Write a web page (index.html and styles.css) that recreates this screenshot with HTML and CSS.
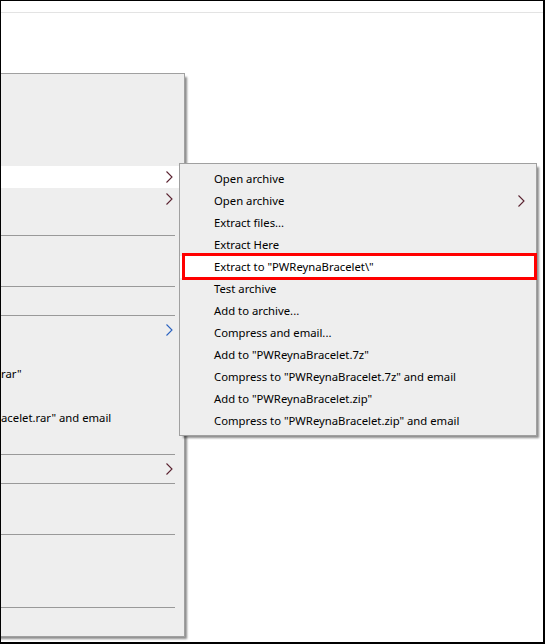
FILE: index.html
```html
<!DOCTYPE html>
<html>
<head>
<meta charset="utf-8">
<link rel="stylesheet" href="styles.css">
</head>
<body>
<div class="screen">
  <div class="topbar"></div>

  <div class="menu menu-left">
    <div class="item"></div>
    <div class="item"></div>
    <div class="item"></div>
    <div class="item"></div>
    <div class="item hl"><span class="label"></span><svg class="chev" width="7" height="12" viewBox="0 0 7 12"><polyline points="0.5,0.5 6,6 0.5,11.5" fill="none" stroke="#5a2230" stroke-width="1.1"/></svg></div>
    <div class="item"><span class="label"></span><svg class="chev" width="7" height="12" viewBox="0 0 7 12"><polyline points="0.5,0.5 6,6 0.5,11.5" fill="none" stroke="#5a2230" stroke-width="1.1"/></svg></div>
    <div class="item"></div>
    <div class="sep"></div>
    <div class="item"></div>
    <div class="item"></div>
    <div class="sep"></div>
    <div class="item"></div>
    <div class="sep"></div>
    <div class="item"><span class="label"></span><svg class="chev" width="7" height="12" viewBox="0 0 7 12"><polyline points="0.5,0.5 6,6 0.5,11.5" fill="none" stroke="#2a62c0" stroke-width="1.1"/></svg></div>
    <div class="item"></div>
    <div class="item edge"><span class="label">rar"</span></div>
    <div class="item"></div>
    <div class="item edge"><span class="label">acelet.rar" and email</span></div>
    <div class="item"></div>
    <div class="sep"></div>
    <div class="item"><span class="label"></span><svg class="chev" width="7" height="12" viewBox="0 0 7 12"><polyline points="0.5,0.5 6,6 0.5,11.5" fill="none" stroke="#5a2230" stroke-width="1.1"/></svg></div>
    <div class="sep"></div>
    <div class="item"></div>
    <div class="item"></div>
    <div class="sep"></div>
    <div class="item"></div>
    <div class="item"></div>
    <div class="item"></div>
    <div class="sep"></div>
    <div class="item"></div>
  </div>

  <div class="menu menu-right">
    <div class="item"><span class="label">Open archive</span></div>
    <div class="item"><span class="label">Open archive</span><svg class="chev" width="7" height="12" viewBox="0 0 7 12"><polyline points="0.5,0.5 6,6 0.5,11.5" fill="none" stroke="#5a2230" stroke-width="1.1"/></svg></div>
    <div class="item"><span class="label">Extract files...</span></div>
    <div class="item"><span class="label">Extract Here</span></div>
    <div class="item hl"><span class="label">Extract to "PWReynaBracelet\"</span></div>
    <div class="item"><span class="label">Test archive</span></div>
    <div class="item"><span class="label">Add to archive...</span></div>
    <div class="item"><span class="label">Compress and email...</span></div>
    <div class="item"><span class="label">Add to "PWReynaBracelet.7z"</span></div>
    <div class="item"><span class="label">Compress to "PWReynaBracelet.7z" and email</span></div>
    <div class="item"><span class="label">Add to "PWReynaBracelet.zip"</span></div>
    <div class="item"><span class="label">Compress to "PWReynaBracelet.zip" and email</span></div>
  </div>

  <div class="callout"></div>
</div>
</body>
</html>
```

FILE: styles.css
```css
html, body {
  margin: 0;
  padding: 0;
  background: #fff;
}

.screen {
  position: relative;
  width: 545px;
  height: 644px;
  box-sizing: border-box;
  border-top: 1px solid #000;
  border-left: 1px solid #000;
  border-right: 2px solid #000;
  border-bottom: 2px solid #000;
  background: #fff;
  overflow: hidden;
  font-family: "Segoe UI", "Noto Sans", "Open Sans", sans-serif;
  font-size: 11.3px;
  color: #000;
}

.topbar {
  height: 11px;
  border-bottom: 1px solid #e3e3e3;
}

.menu {
  position: absolute;
  box-sizing: border-box;
  background: #eeeeee;
  border: 1px solid #a0a0a0;
  box-shadow: 3px 3px 2px -1px rgba(0, 0, 0, 0.45);
  display: flex;
  flex-direction: column;
}

.menu-left {
  left: -176px;
  top: 72px;
  width: 360px;
  padding: 4px 0 3px;
}

.menu-right {
  left: 178px;
  top: 162px;
  width: 358px;
  padding: 4px 0 3px;
}

.item {
  height: 22px;
  display: flex;
  align-items: center;
  padding-left: 34px;
  padding-right: 11px;
  white-space: nowrap;
}

.item.edge {
  padding-left: 175px;
}

.item.hl {
  background: #fff;
}

.label {
  flex: 1;
  line-height: 22px;
}

.chev {
  display: block;
  flex: none;
}

.sep {
  height: 7px;
  display: flex;
  align-items: center;
  padding-left: 30px;
  padding-right: 9px;
}

.sep::before {
  content: "";
  display: block;
  flex: 1;
  height: 1px;
  background: #999;
}

.callout {
  position: absolute;
  left: 181px;
  top: 252px;
  width: 355px;
  height: 27px;
  box-sizing: border-box;
  border: 3px solid #ff0000;
}
```
